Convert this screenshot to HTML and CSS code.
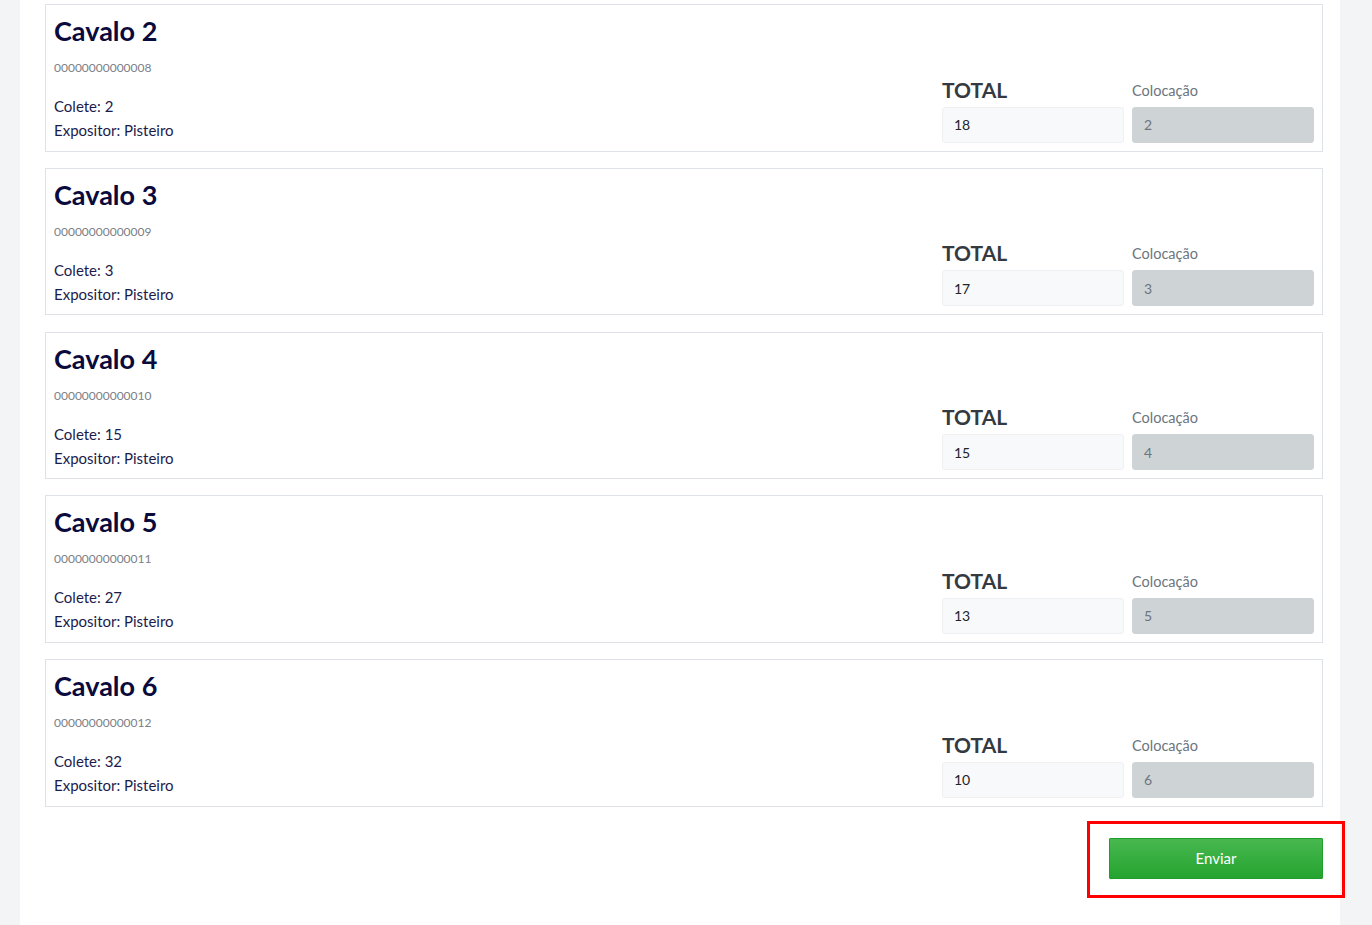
FILE: index.html
```html
<!DOCTYPE html>
<html lang="pt-BR">
<head>
<meta charset="utf-8">
<title>Cavalos</title>
<link rel="stylesheet" href="styles.css">
</head>
<body>
<div class="page">
  <div class="card">
    <div class="info">
      <h2 class="name">Cavalo 2</h2>
      <div class="code">00000000000008</div>
      <div class="line first">Colete: 2</div>
      <div class="line">Expositor: Pisteiro</div>
    </div>
    <div class="scores">
      <div class="lbl-total">TOTAL</div>
      <div class="lbl-col">Colocação</div>
      <input class="inp" type="text" value="18">
      <input class="inp dis" type="text" value="2" disabled>
    </div>
  </div>
  <div class="card">
    <div class="info">
      <h2 class="name">Cavalo 3</h2>
      <div class="code">00000000000009</div>
      <div class="line first">Colete: 3</div>
      <div class="line">Expositor: Pisteiro</div>
    </div>
    <div class="scores">
      <div class="lbl-total">TOTAL</div>
      <div class="lbl-col">Colocação</div>
      <input class="inp" type="text" value="17">
      <input class="inp dis" type="text" value="3" disabled>
    </div>
  </div>
  <div class="card">
    <div class="info">
      <h2 class="name">Cavalo 4</h2>
      <div class="code">00000000000010</div>
      <div class="line first">Colete: 15</div>
      <div class="line">Expositor: Pisteiro</div>
    </div>
    <div class="scores">
      <div class="lbl-total">TOTAL</div>
      <div class="lbl-col">Colocação</div>
      <input class="inp" type="text" value="15">
      <input class="inp dis" type="text" value="4" disabled>
    </div>
  </div>
  <div class="card">
    <div class="info">
      <h2 class="name">Cavalo 5</h2>
      <div class="code">00000000000011</div>
      <div class="line first">Colete: 27</div>
      <div class="line">Expositor: Pisteiro</div>
    </div>
    <div class="scores">
      <div class="lbl-total">TOTAL</div>
      <div class="lbl-col">Colocação</div>
      <input class="inp" type="text" value="13">
      <input class="inp dis" type="text" value="5" disabled>
    </div>
  </div>
  <div class="card">
    <div class="info">
      <h2 class="name">Cavalo 6</h2>
      <div class="code">00000000000012</div>
      <div class="line first">Colete: 32</div>
      <div class="line">Expositor: Pisteiro</div>
    </div>
    <div class="scores">
      <div class="lbl-total">TOTAL</div>
      <div class="lbl-col">Colocação</div>
      <input class="inp" type="text" value="10">
      <input class="inp dis" type="text" value="6" disabled>
    </div>
  </div>
  <div class="footer">
    <div class="highlight">
      <button class="btn" type="button">Enviar</button>
    </div>
  </div>
</div>
</body>
</html>
```

FILE: styles.css
```css
html, body {
  margin: 0;
  padding: 0;
  background: #f3f4f6;
  font-family: Lato, "Liberation Sans", sans-serif;
}
.page {
  margin-left: 20px;
  width: 1320px;
  min-height: 925px;
  background: #ffffff;
  padding: 4px 17px 0 25px;
  box-sizing: border-box;
}
.card {
  display: flex;
  justify-content: space-between;
  border: 1px solid #dee2e6;
  padding: 8px 8px 8px 8px;
  margin-bottom: 16.25px;
  box-sizing: border-box;
  height: 147.5px;
}
.info {
  display: flex;
  flex-direction: column;
}
.name {
  margin: 0;
  font-size: 27px;
  line-height: 36px;
  font-weight: 700;
  color: #0a0a3c;
}
.code {
  margin-top: 10px;
  font-size: 12px;
  line-height: 18px;
  color: #7b8086;
}
.line {
  font-size: 15px;
  line-height: 24px;
  color: #1c1c4c;
}
.line.first {
  margin-top: 17px;
}
.scores {
  align-self: flex-end;
  display: grid;
  grid-template-columns: 182px 182px;
  column-gap: 8px;
  row-gap: 2px;
  align-items: center;
}
.lbl-total {
  font-size: 21px;
  font-weight: 700;
  line-height: 28px;
  color: #343a40;
}
.lbl-col {
  font-size: 14.5px;
  line-height: 28px;
  padding-top: 2px;
  color: #6c757d;
}
.inp {
  height: 36px;
  box-sizing: border-box;
  width: 182px;
  border: 1px solid #eef0f2;
  border-radius: 3px;
  background: #f8f9fa;
  padding: 0 11px;
  font-family: inherit;
  font-size: 14px;
  color: #212529;
  margin: 0;
}
.inp.dis {
  background: #ced3d6;
  border-color: #ced3d6;
  color: #6c757d;
}
.footer {
  display: flex;
  justify-content: flex-end;
  margin-top: -2px;
  margin-right: -22px;
}
.highlight {
  border: 3px solid #ff0000;
  padding: 14px 19px 16px 19px;
}
.btn {
  display: block;
  width: 214px;
  height: 41px;
  border: 1px solid #1f9e2a;
  border-radius: 1px;
  background: linear-gradient(#48b84f, #25a330);
  color: #ffffff;
  font-family: inherit;
  font-size: 15px;
  padding: 0;
}
```
